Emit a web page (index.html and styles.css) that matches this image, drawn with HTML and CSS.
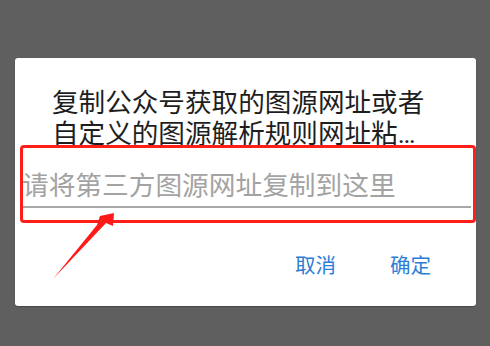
FILE: index.html
```html
<!DOCTYPE html>
<html lang="zh">
<head>
<meta charset="utf-8">
<link rel="stylesheet" href="styles.css">
</head>
<body>
<div class="dialog">
  <div class="title">复制公众号获取的图源网址或者自定义的图源解析规则网址粘贴到这里即可导入图源</div>
  <div class="input"><span class="placeholder">请将第三方图源网址复制到这里</span></div>
  <div class="actions">
    <span class="btn">取消</span>
    <span class="btn">确定</span>
  </div>
</div>
<div class="highlight"></div>
<svg class="arrow" width="490" height="346" viewBox="0 0 490 346">
  <polygon points="53,279 97,225 100,216 114,213 113,226 106,223" fill="#ff1a1a"/>
</svg>
</body>
</html>
```

FILE: styles.css
```css
html, body {
  margin: 0;
  padding: 0;
}
body {
  width: 490px;
  height: 346px;
  background: #5f5f5f;
  font-family: "Noto Sans CJK SC", "Noto Sans", sans-serif;
  overflow: hidden;
  position: relative;
}
.dialog {
  margin: 58px 0 0 15px;
  width: 461px;
  height: 248px;
  background: #ffffff;
  border-radius: 3px;
  box-shadow: 0 1px 1px rgba(0,0,0,0.25);
  box-sizing: border-box;
  padding-top: 29px;
  display: flex;
  flex-direction: column;
}
.title {
  margin-left: 37px;
  width: 388px;
  font-family: Roboto, "Noto Sans CJK SC", sans-serif;
  font-size: 26.6px;
  line-height: 31px;
  color: #1e1e1e;
  display: -webkit-box;
  -webkit-line-clamp: 2;
  -webkit-box-orient: vertical;
  overflow: hidden;
}
.input {
  margin: 18px 0 0 6px;
  width: 449px;
  height: 34px;
  line-height: 34px;
  padding: 0 0 5px 1px;
  border-bottom: 2px solid #a8a8a8;
  box-sizing: content-box;
}
.placeholder {
  font-size: 26.7px;
  color: #a3a3a3;
}
.actions {
  margin-top: 42px;
  display: flex;
  justify-content: flex-end;
  gap: 54px;
  padding-right: 45px;
}
.btn {
  font-size: 20.5px;
  line-height: 28px;
  color: #2b7dd6;
}
.highlight {
  position: absolute;
  left: 20px;
  top: 145px;
  width: 456px;
  height: 78px;
  border: 3px solid #ff1f1a;
  border-radius: 4px;
  box-sizing: border-box;
}
.arrow {
  position: absolute;
  left: 0;
  top: 0;
}
```
